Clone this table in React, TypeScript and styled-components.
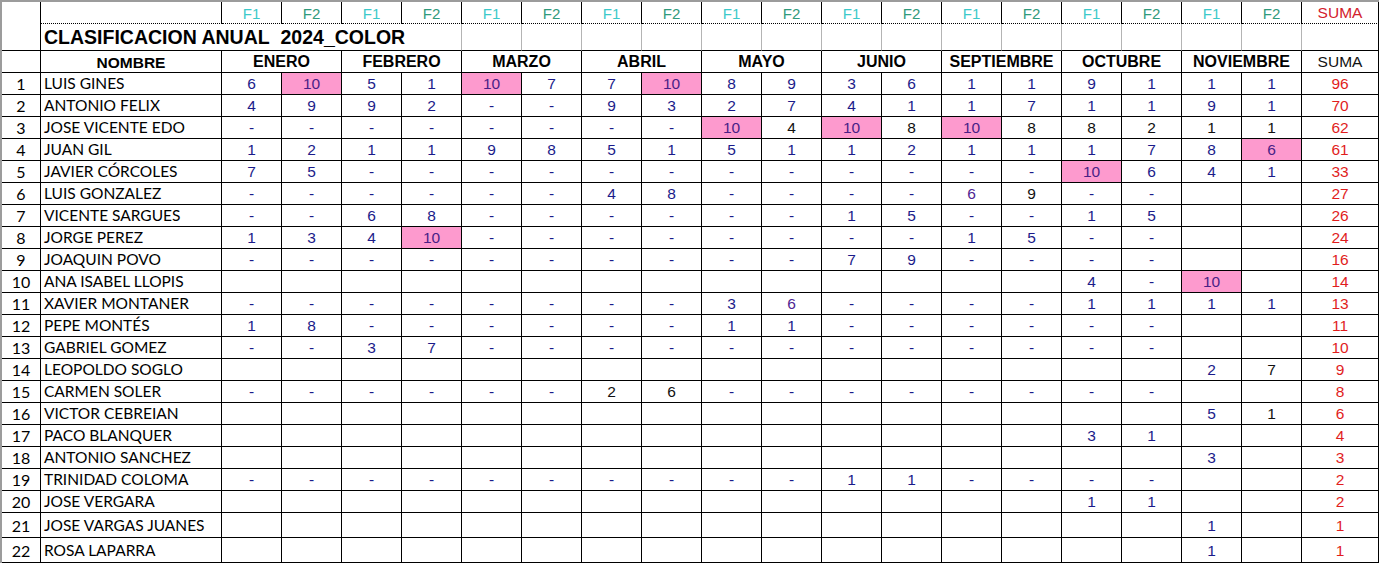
import React from "react"
import styled, { createGlobalStyle } from "styled-components"

const GlobalStyle = createGlobalStyle`
  html, body {
    margin: 0;
    padding: 0;
    background: #ffffff;
  }
`

const MONTHS = ["ENERO", "FEBRERO", "MARZO", "ABRIL", "MAYO", "JUNIO", "SEPTIEMBRE", "OCTUBRE", "NOVIEMBRE"]

// tokens: "_" empty, "-" dash, "*" pink cell, "k" black ink, "p" purple ink
const ROWS: [string, string, number][] = [
  ["LUIS GINES", "6 10* 5 1 10* 7 7 10* 8 9 3 6 1 1 9 1 1 1", 96],
  ["ANTONIO FELIX", "4 9 9 2 - - 9 3 2 7 4 1 1 7 1 1 9 1", 70],
  ["JOSE VICENTE EDO", "- - - - - - - - 10* 4k 10* 8k 10* 8k 8k 2k 1k 1k", 62],
  ["JUAN GIL", "1 2 1 1 9 8 5 1 5 1 1 2 1 1 1 7 8 6*", 61],
  ["JAVIER CÓRCOLES", "7 5 - - - - - - - - - - - - 10* 6 4 1", 33],
  ["LUIS GONZALEZ", "- - - - - - 4 8 - - - - 6p 9k - - _ _", 27],
  ["VICENTE SARGUES", "- - 6 8 - - - - - - 1 5 - - 1 5 _ _", 26],
  ["JORGE PEREZ", "1 3 4 10* - - - - - - - - 1 5 - - _ _", 24],
  ["JOAQUIN POVO", "- - - - - - - - - - 7 9 - - - - _ _", 16],
  ["ANA ISABEL LLOPIS", "_ _ _ _ _ _ _ _ _ _ _ _ _ _ 4 - 10* _", 14],
  ["XAVIER MONTANER", "- - - - - - - - 3 6p - - - - 1 1 1 1", 13],
  ["PEPE MONTÉS", "1 8 - - - - - - 1 1 - - - - - - _ _", 11],
  ["GABRIEL GOMEZ", "- - 3 7 - - - - - - - - - - - - _ _", 10],
  ["LEOPOLDO SOGLO", "_ _ _ _ _ _ _ _ _ _ _ _ _ _ _ _ 2 7k", 9],
  ["CARMEN SOLER", "- - - - - - 2k 6k - - - - - - - - _ _", 8],
  ["VICTOR CEBREIAN", "_ _ _ _ _ _ _ _ _ _ _ _ _ _ _ _ 5 1k", 6],
  ["PACO BLANQUER", "_ _ _ _ _ _ _ _ _ _ _ _ _ _ 3 1 _ _", 4],
  ["ANTONIO SANCHEZ", "_ _ _ _ _ _ _ _ _ _ _ _ _ _ _ _ 3 _", 3],
  ["TRINIDAD COLOMA", "- - - - - - - - - - 1 1 - - - - _ _", 2],
  ["JOSE VERGARA", "_ _ _ _ _ _ _ _ _ _ _ _ _ _ 1 1 _ _", 2],
  ["JOSE VARGAS JUANES", "_ _ _ _ _ _ _ _ _ _ _ _ _ _ _ _ 1 _", 1],
  ["ROSA LAPARRA", "_ _ _ _ _ _ _ _ _ _ _ _ _ _ _ _ 1 _", 1],
]

type Ink = "navy" | "black" | "purple" | "pink"

const INK: Record<Ink, string> = {
  navy: "#1b1b8a",
  black: "#111111",
  purple: "#4f2592",
  pink: "#4a1f86",
}

const parseCell = (token: string): { text: string; ink: Ink; pink: boolean } => {
  if (token === "_") return { text: "", ink: "navy", pink: false }
  if (token.endsWith("*")) return { text: token.slice(0, -1), ink: "pink", pink: true }
  if (token.endsWith("k")) return { text: token.slice(0, -1), ink: "black", pink: false }
  if (token.endsWith("p")) return { text: token.slice(0, -1), ink: "purple", pink: false }
  return { text: token, ink: "navy", pink: false }
}

export default function App() {
  return <>
    <GlobalStyle />
    <S.Sheet>
      {/* row of F1 / F2 labels */}
      <S.Corner />
      <S.LabelBlank />
      {MONTHS.map(m => <React.Fragment key={"f_" + m}>
        <S.RoundLabel $round={1}>F1</S.RoundLabel>
        <S.RoundLabel $round={2}>F2</S.RoundLabel>
      </React.Fragment>)}
      <S.SumLabel>SUMA</S.SumLabel>

      {/* title row */}
      <S.IndexCell />
      <S.Title>CLASIFICACION ANUAL&nbsp; 2024_COLOR</S.Title>
      {Array.from({ length: 14 }).map((_, i) => <S.GridGap key={"g_" + i} />)}
      <S.GridGap $last />

      {/* header row */}
      <S.IndexCell />
      <S.Head>NOMBRE</S.Head>
      {MONTHS.map(m => <S.MonthHead key={m}>{m}</S.MonthHead>)}
      <S.SumHead>SUMA</S.SumHead>

      {ROWS.map(([name, cells, sum], i) => <React.Fragment key={"r_" + name}>
        <S.IndexCell>{i + 1}</S.IndexCell>
        <S.NameCell>{name}</S.NameCell>
        {cells.split(" ").map((tok, j) => {
          const c = parseCell(tok)
          return <S.Score key={j} $ink={c.ink} $pink={c.pink}>{c.text}</S.Score>
        })}
        <S.SumCell>{sum}</S.SumCell>
      </React.Fragment>)}
    </S.Sheet>
  </>
}

const arial = `"Liberation Sans", Arial, sans-serif`
const calibri = `Lato, "Noto Sans", sans-serif`

const BaseCell = styled.div`
  box-sizing: border-box;
  border-right: 1px solid #000;
  border-bottom: 1px solid #000;
  display: flex;
  align-items: center;
  justify-content: center;
  white-space: nowrap;
  overflow: visible;
  font-family: ${arial};
  font-size: 15px;
  line-height: 1;
`

const S = {
  Sheet: styled.div`
    display: grid;
    grid-template-columns: 39px 181px repeat(18, 60px) 77px;
    grid-template-rows: 22px 27px 22px repeat(20, 22px) 25px 25px;
    width: fit-content;
    border-top: 2px solid #9c9c9c;
    border-left: 2px solid #9c9c9c;
    background: #fff;
  `,
  Corner: styled(BaseCell)`
    border-bottom: none;
  `,
  LabelBlank: styled(BaseCell)`
    border-bottom: 1px dotted #000;
  `,
  RoundLabel: styled(BaseCell)<{ $round: 1 | 2 }>`
    border-bottom: 1px dotted #000;
    color: ${p => p.$round === 1 ? "#3cc9c9" : "#2f9a7c"};
    padding-top: 1px;
  `,
  SumLabel: styled(BaseCell)`
    border-bottom: 1px dotted #000;
    color: #d3202c;
    padding-top: 1px;
    font-size: 15.5px;
  `,
  Title: styled(BaseCell)`
    grid-column: span 5;
    justify-content: flex-start;
    border-right: 1px solid #b4b4b4;
    padding: 2px 0 0 3px;
    font-size: 19.5px;
    font-weight: 700;
    color: #000;
  `,
  GridGap: styled(BaseCell)<{ $last?: boolean }>`
    border-right: 1px solid ${p => p.$last ? "#000" : "#b4b4b4"};
  `,
  Head: styled(BaseCell)`
    font-size: 15.5px;
    font-weight: 700;
    color: #000;
    padding-top: 2px;
  `,
  MonthHead: styled(BaseCell)`
    grid-column: span 2;
    font-size: 16px;
    font-weight: 700;
    color: #000;
    padding-top: 1px;
  `,
  SumHead: styled(BaseCell)`
    font-size: 15.5px;
    color: #111;
    padding-top: 1px;
  `,
  IndexCell: styled(BaseCell)`
    font-family: ${calibri};
    font-size: 16px;
    color: #000;
    padding-top: 1px;
  `,
  NameCell: styled(BaseCell)`
    justify-content: flex-start;
    padding: 1px 0 0 3px;
    font-family: ${calibri};
    font-size: 15.5px;
    color: #000;
  `,
  Score: styled(BaseCell)<{ $ink: Ink; $pink: boolean }>`
    color: ${p => INK[p.$ink]};
    background: ${p => p.$pink ? "#fd9ace" : "transparent"};
    padding-top: 1px;
    font-size: 15.5px;
  `,
  SumCell: styled(BaseCell)`
    color: #e11d1d;
    padding-top: 1px;
    font-size: 15.5px;
  `,
}
